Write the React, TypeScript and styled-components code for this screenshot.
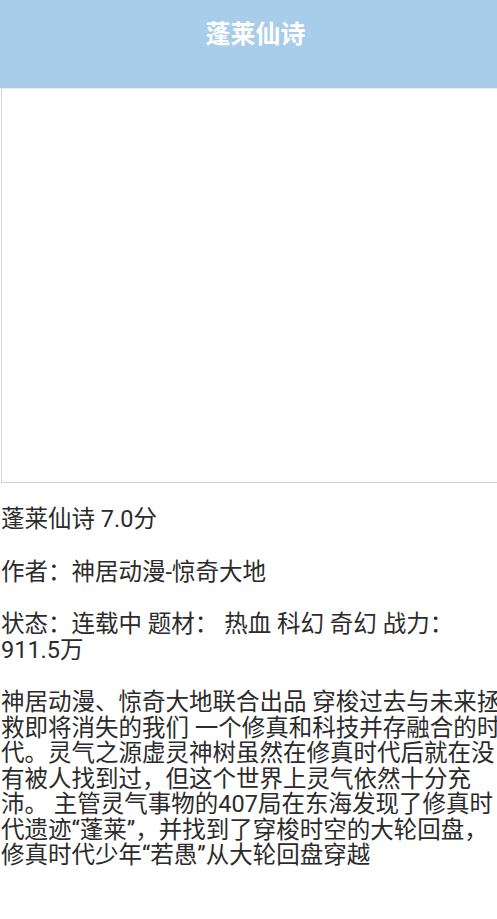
import React, { ReactElement } from 'react'
import styled, { createGlobalStyle } from 'styled-components'

const book = {
  title: '蓬莱仙诗',
  score: '7.0分',
  author: '神居动漫-惊奇大地',
  status: '连载中',
  tags: ['热血', '科幻', '奇幻'],
  power: '911.5万',
  intro:
    '神居动漫、惊奇大地联合出品 穿梭过去与未来拯救即将消失的我们 一个修真和科技并存融合的时代。灵气之源虚灵神树虽然在修真时代后就在没有被人找到过，但这个世界上灵气依然十分充沛。 主管灵气事物的407局在东海发现了修真时代遗迹“蓬莱”，并找到了穿梭时空的大轮回盘，修真时代少年“若愚”从大轮回盘穿越'
}

export default function App(): ReactElement {
  return (
    <>
      <GlobalStyle />
      <Page>
        <TitleBar>
          <Title>{book.title}</Title>
        </TitleBar>
        <Body>
          <Cover />
          <Info>
            <Line>
              {book.title} {book.score}
            </Line>
            <Line>作者：{book.author}</Line>
            <Line>
              状态：{book.status} 题材： {book.tags.join(' ')} 战力：{book.power}
            </Line>
            <Line>{book.intro}</Line>
          </Info>
        </Body>
      </Page>
    </>
  )
}

const GlobalStyle = createGlobalStyle`
  html, body {
    margin: 0;
    padding: 0;
    overflow-x: hidden;
    background: #fff;
  }
  body {
    font-family: Roboto, "Noto Sans CJK SC", sans-serif;
  }
`

const Page = styled.div`
  width: 511px;
`

const TitleBar = styled.header`
  box-sizing: border-box;
  height: 88px;
  padding-top: 20px;
  background: #a8cdea;
  text-align: center;
`

const Title = styled.h1`
  margin: 0;
  font-size: 25px;
  line-height: 30px;
  font-weight: bold;
  color: #fff;
`

const Body = styled.main`
  padding-left: 1px;
`

const Cover = styled.div`
  box-sizing: border-box;
  height: 395px;
  border: 1px solid #d4d4d4;
  border-top-color: #e6eef5;
`

const Info = styled.section`
  display: flex;
  flex-direction: column;
  gap: 27px;
  width: 503px;
  padding-top: 24px;
`

const Line = styled.p`
  margin: 0;
  font-size: 23.5px;
  line-height: 25.5px;
  color: #2b2b2b;
`
